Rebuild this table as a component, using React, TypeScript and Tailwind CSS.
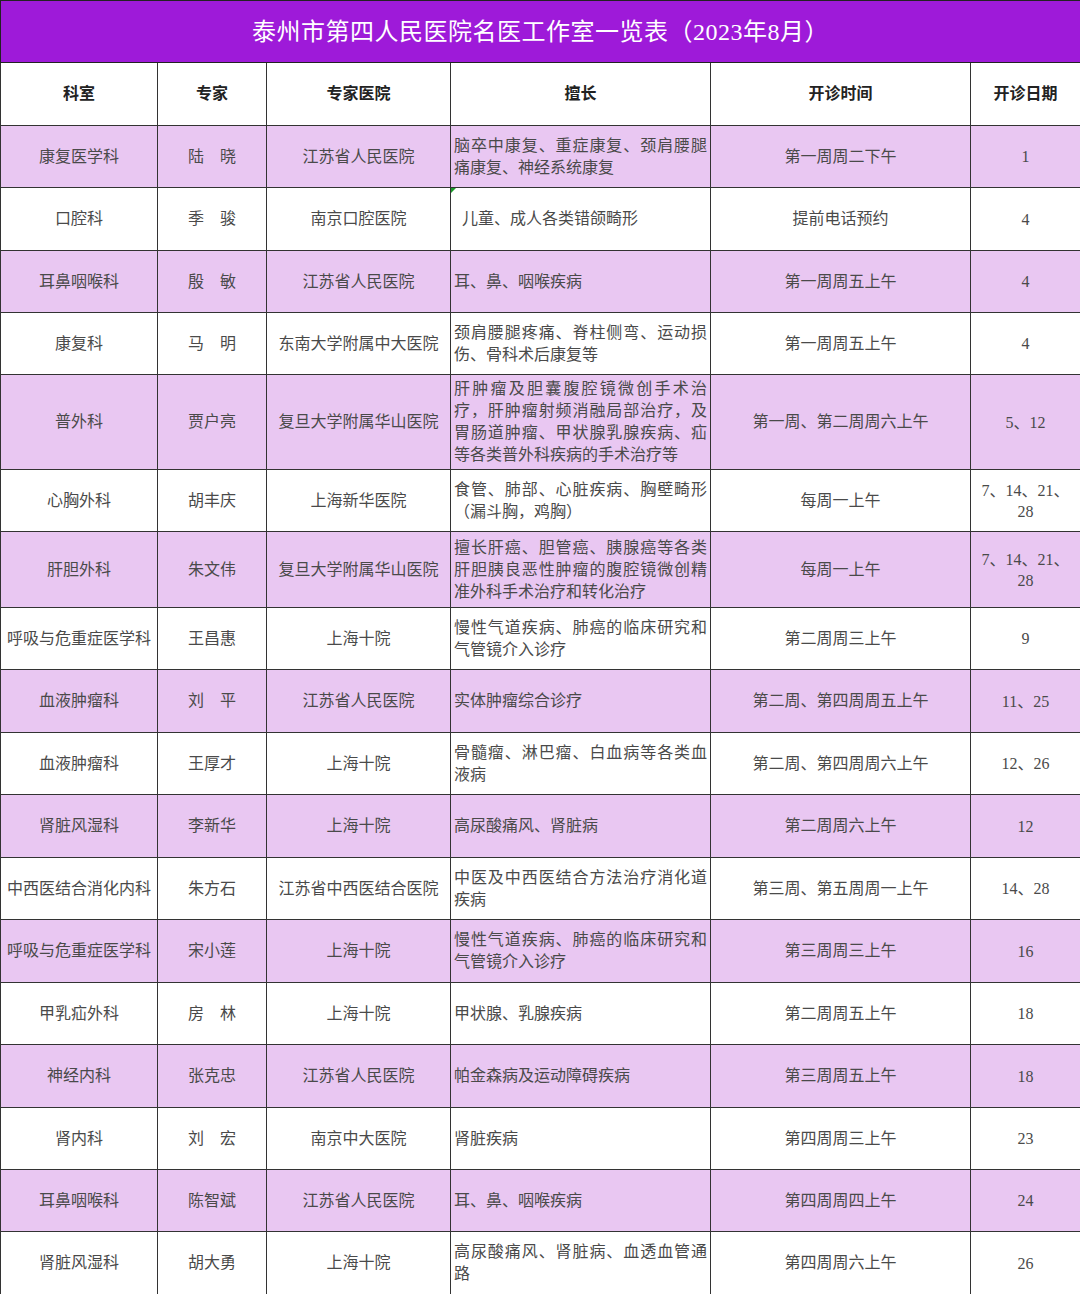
import React from "react";

type Row = {
  dept: string;
  name: string;
  hospital: string;
  skill: string;
  time: string;
  dates: React.ReactNode;
  h: string;
  mark?: boolean;
};

const ROWS: Row[] = [
  { dept: "康复医学科", name: "陆\u3000晓", hospital: "江苏省人民医院", skill: "脑卒中康复、重症康复、颈肩腰腿痛康复、神经系统康复", time: "第一周周二下午", dates: "1", h: "h-[62px]" },
  { dept: "口腔科", name: "季\u3000骏", hospital: "南京口腔医院", skill: "\u00a0\u00a0儿童、成人各类错颌畸形", time: "提前电话预约", dates: "4", h: "h-[63px]", mark: true },
  { dept: "耳鼻咽喉科", name: "殷\u3000敏", hospital: "江苏省人民医院", skill: "耳、鼻、咽喉疾病", time: "第一周周五上午", dates: "4", h: "h-[62px]" },
  { dept: "康复科", name: "马\u3000明", hospital: "东南大学附属中大医院", skill: "颈肩腰腿疼痛、脊柱侧弯、运动损伤、骨科术后康复等", time: "第一周周五上午", dates: "4", h: "h-[62px]" },
  { dept: "普外科", name: "贾户亮", hospital: "复旦大学附属华山医院", skill: "肝肿瘤及胆囊腹腔镜微创手术治疗，肝肿瘤射频消融局部治疗，及胃肠道肿瘤、甲状腺乳腺疾病、疝等各类普外科疾病的手术治疗等", time: "第一周、第二周周六上午", dates: "5、12", h: "h-[95px]" },
  { dept: "心胸外科", name: "胡丰庆", hospital: "上海新华医院", skill: "食管、肺部、心脏疾病、胸壁畸形（漏斗胸，鸡胸）", time: "每周一上午", dates: <>7、14、21、<br />28</>, h: "h-[62px]" },
  { dept: "肝胆外科", name: "朱文伟", hospital: "复旦大学附属华山医院", skill: "擅长肝癌、胆管癌、胰腺癌等各类肝胆胰良恶性肿瘤的腹腔镜微创精准外科手术治疗和转化治疗", time: "每周一上午", dates: <>7、14、21、<br />28</>, h: "h-[76px]" },
  { dept: "呼吸与危重症医学科", name: "王昌惠", hospital: "上海十院", skill: "慢性气道疾病、肺癌的临床研究和气管镜介入诊疗", time: "第二周周三上午", dates: "9", h: "h-[62px]" },
  { dept: "血液肿瘤科", name: "刘\u3000平", hospital: "江苏省人民医院", skill: "实体肿瘤综合诊疗", time: "第二周、第四周周五上午", dates: "11、25", h: "h-[63px]" },
  { dept: "血液肿瘤科", name: "王厚才", hospital: "上海十院", skill: "骨髓瘤、淋巴瘤、白血病等各类血液病", time: "第二周、第四周周六上午", dates: "12、26", h: "h-[62px]" },
  { dept: "肾脏风湿科", name: "李新华", hospital: "上海十院", skill: "高尿酸痛风、肾脏病", time: "第二周周六上午", dates: "12", h: "h-[63px]" },
  { dept: "中西医结合消化内科", name: "朱方石", hospital: "江苏省中西医结合医院", skill: "中医及中西医结合方法治疗消化道疾病", time: "第三周、第五周周一上午", dates: "14、28", h: "h-[62px]" },
  { dept: "呼吸与危重症医学科", name: "宋小莲", hospital: "上海十院", skill: "慢性气道疾病、肺癌的临床研究和气管镜介入诊疗", time: "第三周周三上午", dates: "16", h: "h-[63px]" },
  { dept: "甲乳疝外科", name: "房\u3000林", hospital: "上海十院", skill: "甲状腺、乳腺疾病", time: "第二周周五上午", dates: "18", h: "h-[62px]" },
  { dept: "神经内科", name: "张克忠", hospital: "江苏省人民医院", skill: "帕金森病及运动障碍疾病", time: "第三周周五上午", dates: "18", h: "h-[63px]" },
  { dept: "肾内科", name: "刘\u3000宏", hospital: "南京中大医院", skill: "肾脏疾病", time: "第四周周三上午", dates: "23", h: "h-[62px]" },
  { dept: "耳鼻咽喉科", name: "陈智斌", hospital: "江苏省人民医院", skill: "耳、鼻、咽喉疾病", time: "第四周周四上午", dates: "24", h: "h-[62px]" },
  { dept: "肾脏风湿科", name: "胡大勇", hospital: "上海十院", skill: "高尿酸痛风、肾脏病、血透血管通路", time: "第四周周六上午", dates: "26", h: "h-[63px]" },
];

const HEADERS = ["科室", "专家", "专家医院", "擅长", "开诊时间", "开诊日期"];

const cell = "border border-[#333] p-0 text-center align-middle";

export default function App() {
  return (
    <div className="w-[1080px] bg-white font-['Liberation_Serif','Noto_Sans_CJK_SC',serif] text-[16px] text-[#4a4a4a]">
      <table className="w-[1080px] table-fixed border-collapse">
        <colgroup>
          <col className="w-[157px]" />
          <col className="w-[109px]" />
          <col className="w-[184px]" />
          <col className="w-[260px]" />
          <col className="w-[260px]" />
          <col className="w-[110px]" />
        </colgroup>
        <tbody>
          <tr className="h-[62px]">
            <td colSpan={6} className="border border-[#222] bg-[#9e1ad9] text-center align-middle text-[24px] tracking-[0.5px] text-white">
              泰州市第四人民医院名医工作室一览表（2023年8月）
            </td>
          </tr>
          <tr className="h-[63px]">
            {HEADERS.map((h) => (
              <td key={h} className={`${cell} font-bold text-[#222]`}>
                {h}
              </td>
            ))}
          </tr>
          {ROWS.map((r, i) => (
            <tr key={i} className={`${r.h} ${i % 2 === 0 ? "bg-[#e9c7f2]" : "bg-white"}`}>
              <td className={cell}>{r.dept}</td>
              <td className={cell}>{r.name}</td>
              <td className={cell}>{r.hospital}</td>
              <td className="relative border border-[#333] px-[3px] py-0 text-justify align-middle leading-[22px]">
                {r.mark && (
                  <span className="absolute left-0 top-0 h-0 w-0 border-t-[5px] border-r-[5px] border-t-[#1a9a2a] border-r-transparent" />
                )}
                {r.skill}
              </td>
              <td className={cell}>{r.time}</td>
              <td className={`${cell} leading-[21px]`}>{r.dates}</td>
            </tr>
          ))}
        </tbody>
      </table>
    </div>
  );
}
